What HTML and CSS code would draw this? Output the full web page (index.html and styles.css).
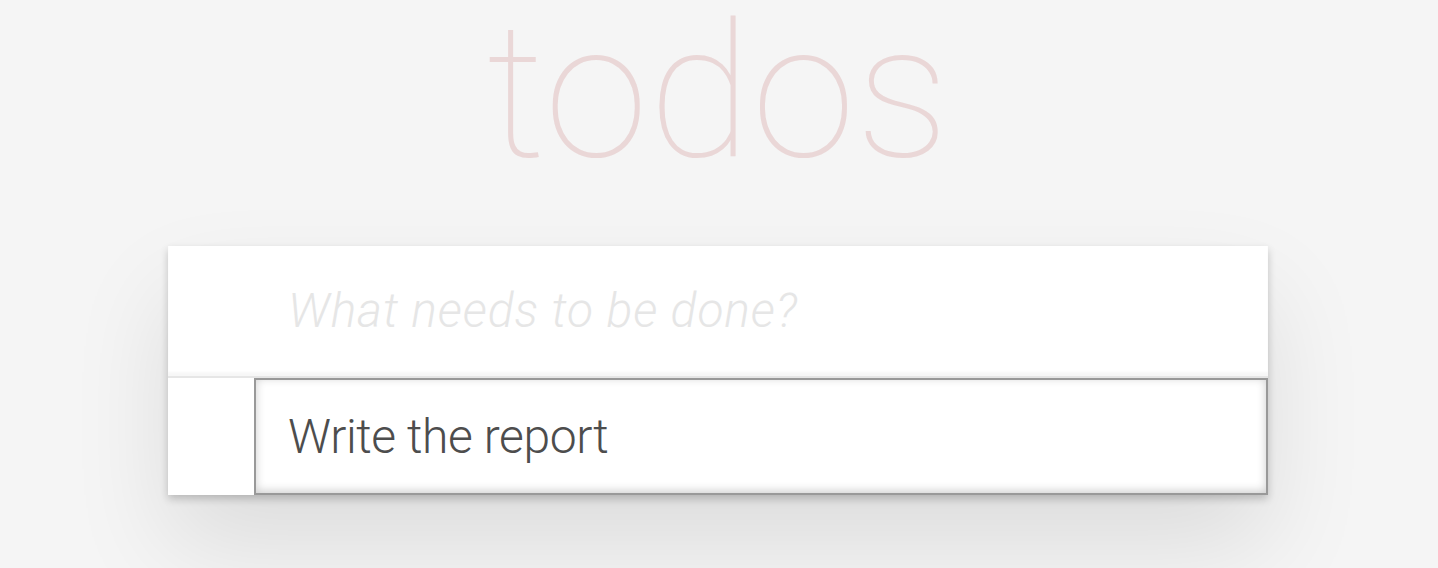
FILE: index.html
```html
<!DOCTYPE html>
<html lang="en">
<head>
<meta charset="utf-8">
<title>todos</title>
<link rel="stylesheet" href="styles.css">
</head>
<body>
<section class="todoapp">
  <header class="header">
    <h1 class="title">todos</h1>
    <div class="card">
      <div class="new-todo"><span class="placeholder">What needs to be done?</span></div>
      <div class="main">
        <div class="item">
          <div class="edit">Write the report</div>
        </div>
      </div>
    </div>
  </header>
</section>
</body>
</html>
```
FILE: styles.css
```css
html, body {
  margin: 0;
  padding: 0;
}
body {
  background: #f5f5f5;
  font-family: Roboto, "Liberation Sans", Arial, sans-serif;
  font-weight: 300;
  color: #4d4d4d;
  height: 568px;
  overflow: hidden;
  padding-right: 2px;
}
.todoapp {
  width: 1100px;
  margin: 0 auto;
}
.title {
  margin: 0;
  height: 246px;
  font-family: Roboto, sans-serif;
  font-weight: 100;
  font-size: 188px;
  line-height: 184px;
  text-align: center;
  color: rgba(175, 47, 47, 0.15);
  letter-spacing: 0.5px;
}
.card {
  background: #fff;
  box-shadow: 0 4px 8px 0 rgba(0, 0, 0, 0.2), 0 50px 100px 0 rgba(0, 0, 0, 0.1);
}
.new-todo {
  padding: 32px 32px 32px 120px;
  font-size: 48px;
  line-height: 66px;
  box-shadow: inset 0 -4px 2px rgba(0, 0, 0, 0.03);
}
.placeholder {
  font-style: italic;
  color: #e6e6e6;
  letter-spacing: 0.9px;
}
.main {
  border-top: 2px solid #e6e6e6;
}
.item {
  padding-left: 86px;
}
.edit {
  font-size: 48px;
  line-height: 65px;
  padding: 24px 32px;
  border: 2px solid #999;
  box-shadow: inset 0 -2px 10px 0 rgba(0, 0, 0, 0.2);
  color: #4d4d4d;
  background: #fff;
  letter-spacing: -0.4px;
}
```
